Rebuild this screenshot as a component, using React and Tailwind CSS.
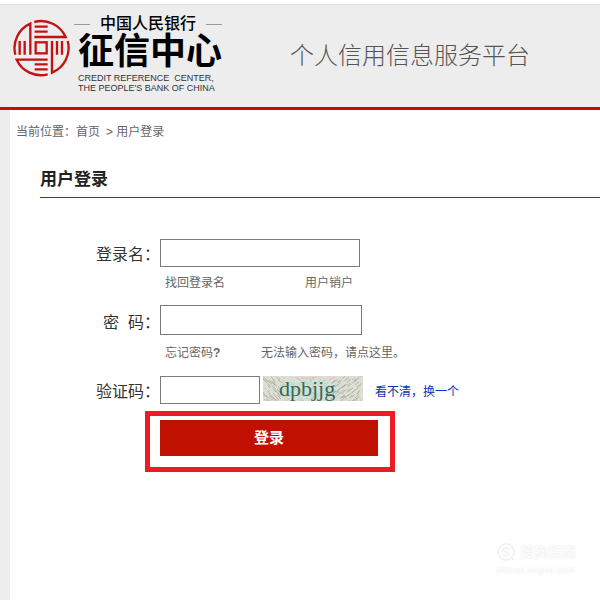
function LogoMark() {
  return (
    <svg viewBox="37 56 174 174" className="h-[58px] w-[58px] shrink-0" fill="none" stroke="#c41212" strokeWidth="7">
      <path d="M92 163V70A80 80 0 0 0 47 163M60 122V163M75 122V163" />
      <path d="M104 65A80 80 0 0 1 198 110H104M105 79H144M105 94H144" />
      <path d="M157 122V217A80 80 0 0 0 204 122M172 122V163M187 122V163" />
      <path d="M144 222A80 80 0 0 1 51 178H144M105 192H144M105 207H144" />
      <rect x="108" y="126" width="33" height="33" />
    </svg>
  )
}

// deterministic scatter for the captcha background
const strokes = Array.from({ length: 260 }, (_, i) => {
  const x = (i * 37 + (i * i) % 13) % 101
  const y = (i * 17 + (i * i) % 11) % 26
  const dir = x < 50 ? 1 : -1
  return { x, y, dx: (2 + (i % 4)) * dir, dy: 2 + (i % 3), color: i % 3 ? '#a3aea7' : '#bcc4bb' }
})

function Captcha() {
  return (
    <svg viewBox="0 0 100 25" className="h-[25px] w-[100px] shrink-0" role="img" aria-label="验证码图片">
      <rect width="100" height="25" fill="#dfded3" />
      <ellipse cx="46" cy="13" rx="30" ry="11" fill="#d3e2d7" />
      <path d="M32 2h14M60 3h16M8 23h10M50 1h6" stroke="#efd2cc" strokeWidth="2" />
      {strokes.map((s, i) => (
        <path
          key={i}
          d={`M${s.x} ${s.y}l${s.dx} ${s.dy}`}
          stroke={s.color}
          strokeWidth="0.8"
          opacity={s.x > 16 && s.x < 72 ? 0.35 : 0.9}
        />
      ))}
      <text x="16" y="20" fontSize="22" fill="#34695b" fontFamily="'Liberation Serif', serif">
        dpbjjg
      </text>
    </svg>
  )
}

function Header() {
  return (
    <header className="border-b-3 border-[#c01000] bg-white pt-1">
      <div className="flex h-[103px] items-start border-t border-[#dedede] bg-[#ededed] pl-3">
        <div className="flex pt-[11px]">
          <div className="pt-[3px]">
            <LogoMark />
          </div>
          <div className="ml-2 w-36 text-black">
            <div className="-ml-1 flex items-center justify-between">
              <span className="h-px w-4 bg-[#999]" />
              <span className="text-base leading-4 font-medium">中国人民银行</span>
              <span className="h-px w-4 bg-[#999]" />
            </div>
            <div className="mt-px text-[36px] leading-[38px] font-bold whitespace-nowrap">征信中心</div>
            <div className="mt-[2px] text-[9px] leading-[10px] whitespace-nowrap text-[#333]">
              <div>CREDIT REFERENCE&nbsp; CENTER,</div>
              <div>THE PEOPLE'S BANK OF CHINA</div>
            </div>
          </div>
        </div>
        <h1 className="ml-17 pt-[33px] text-2xl leading-9 font-light whitespace-nowrap text-[#555]">个人信用信息服务平台</h1>
      </div>
    </header>
  )
}

function Field({ id, label, children }) {
  return (
    <div className="flex items-center">
      <label htmlFor={id} className="w-[120px] shrink-0 pt-[5px] text-right text-base leading-6 whitespace-pre text-[#333]">
        {label}
      </label>
      {children}
    </div>
  )
}

function Watermark() {
  return (
    <div className="absolute right-6 bottom-6 text-[#fdfdfd] [text-shadow:0_0_2px_#e4e4e4]">
      <div className="flex items-center gap-1 text-sm leading-6 font-medium">
        <svg viewBox="0 0 20 20" className="h-5 w-5" fill="none" stroke="#f2f2f2" strokeWidth="2">
          <circle cx="10" cy="10" r="8" />
          <path d="M13 7C10 5 7 6 7 8s6 2 6 4-3 3-6 1M16 16l2 2" />
        </svg>
        搜狗指南
      </div>
      <div className="text-[9px] leading-3 font-bold">zhinan.sogou.com</div>
    </div>
  )
}

const inputClass = 'border border-[#7b7b7b] bg-white px-1 outline-none'

export default function App() {
  return (
    <div className="relative flex min-h-screen flex-col overflow-hidden bg-white font-['Liberation_Sans','Noto_Sans_CJK_SC',sans-serif]">
      <Header />
      <main className="ml-[10px] flex-1 shadow-[-10px_0_0_#ededed]">
        <nav className="flex gap-1 pt-3 pl-[6px] text-xs leading-5 text-[#666]">
          <span>
            当前位置：<a href="#home">首页</a>
          </span>
          <span className="pl-[2px]">&gt; 用户登录</span>
        </nav>
        <h2 className="mt-6 ml-[30px] border-b border-[#c01000] pb-[3px] text-[17px] leading-7 font-bold text-[#222]">
          用户登录
        </h2>
        <form className="mt-10 ml-[30px]" onSubmit={(e) => e.preventDefault()}>
          <Field id="username" label="登录名：">
            <input id="username" type="text" className={`h-7 w-[200px] ${inputClass}`} />
          </Field>
          <div className="mt-[6px] flex pl-[125px] text-xs leading-5 text-[#666]">
            <a href="#find" className="w-[140px]">找回登录名</a>
            <a href="#cancel">用户销户</a>
          </div>
          <div className="mt-3">
            <Field id="password" label="密  码：">
              <input id="password" type="password" className={`h-[30px] w-[202px] ${inputClass}`} />
            </Field>
          </div>
          <div className="mt-2 flex pl-[125px] text-xs leading-5 text-[#666]">
            <a href="#forgot" className="w-24">
              忘记密码<b>?</b>
            </a>
            <a href="#plugin">无法输入密码，请点这里。</a>
          </div>
          <div className="mt-[11px]">
            <Field id="captcha" label="验证码：">
              <input id="captcha" type="text" className={`h-7 w-[100px] ${inputClass}`} />
              <div className="ml-[3px] flex items-center gap-3 pb-[3px]">
                <Captcha />
                <a href="#refresh" className="pt-2 text-xs leading-5 whitespace-nowrap text-[#0a32b4]">看不清，换一个</a>
              </div>
            </Field>
          </div>
          <div className="mt-[6px] ml-[105px] w-[250px] border-5 border-[#ed1c24] pt-1 pr-3 pb-[11px] pl-[10px]">
            <button type="submit" className="block h-9 w-full bg-[#c01000] text-[15px] font-bold text-white">
              登录
            </button>
          </div>
        </form>
      </main>
      <Watermark />
    </div>
  )
}
